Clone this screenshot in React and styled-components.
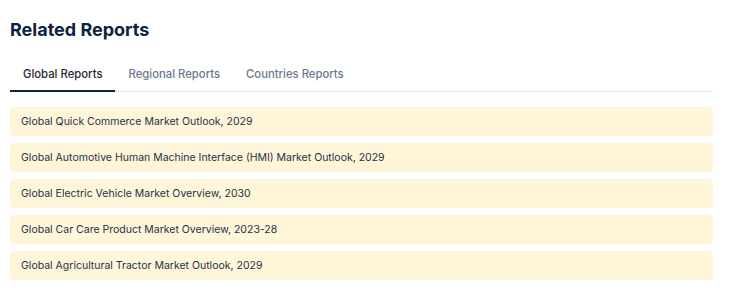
import styled, { createGlobalStyle } from "styled-components";

const GlobalStyle = createGlobalStyle`
  body {
    margin: 0;
    background: #ffffff;
    font-family: Inter, "Noto Sans", sans-serif;
  }
`;

const Container = styled.div`
  padding: 18px 16px 0 10px;
`;

const Title = styled.h2`
  margin: 0;
  font-size: 18px;
  font-weight: 700;
  line-height: 24px;
  color: #0b2340;
`;

const Tabs = styled.div`
  display: flex;
  margin-top: 16px;
  border-bottom: 1px solid #e5e7eb;
`;

const Tab = styled.div`
  padding: 0 13px;
  height: 32px;
  display: flex;
  align-items: center;
  font-size: 11.3px;
  font-weight: 500;
  color: ${(props) => (props.active ? "#1f2937" : "#6b7790")};
  border-bottom: 2px solid ${(props) => (props.active ? "#0b2340" : "transparent")};
  margin-bottom: -1px;
  cursor: pointer;
`;

const List = styled.div`
  display: flex;
  flex-direction: column;
  gap: 7px;
  margin-top: 15px;
`;

const Item = styled.div`
  height: 29px;
  display: flex;
  align-items: center;
  padding: 0 11px;
  background: #fff5d9;
  border-radius: 4px;
  font-size: 10.5px;
  color: #26324a;
`;

const reports = [
  "Global Quick Commerce Market Outlook, 2029",
  "Global Automotive Human Machine Interface (HMI) Market Outlook, 2029",
  "Global Electric Vehicle Market Overview, 2030",
  "Global Car Care Product Market Overview, 2023-28",
  "Global Agricultural Tractor Market Outlook, 2029",
];

const App = () => {
  return (
    <Container>
      <GlobalStyle />
      <Title>Related Reports</Title>
      <Tabs>
        <Tab active>Global Reports</Tab>
        <Tab>Regional Reports</Tab>
        <Tab>Countries Reports</Tab>
      </Tabs>
      <List>
        {reports.map((r) => (
          <Item key={r}>{r}</Item>
        ))}
      </List>
    </Container>
  );
};

export default App;
